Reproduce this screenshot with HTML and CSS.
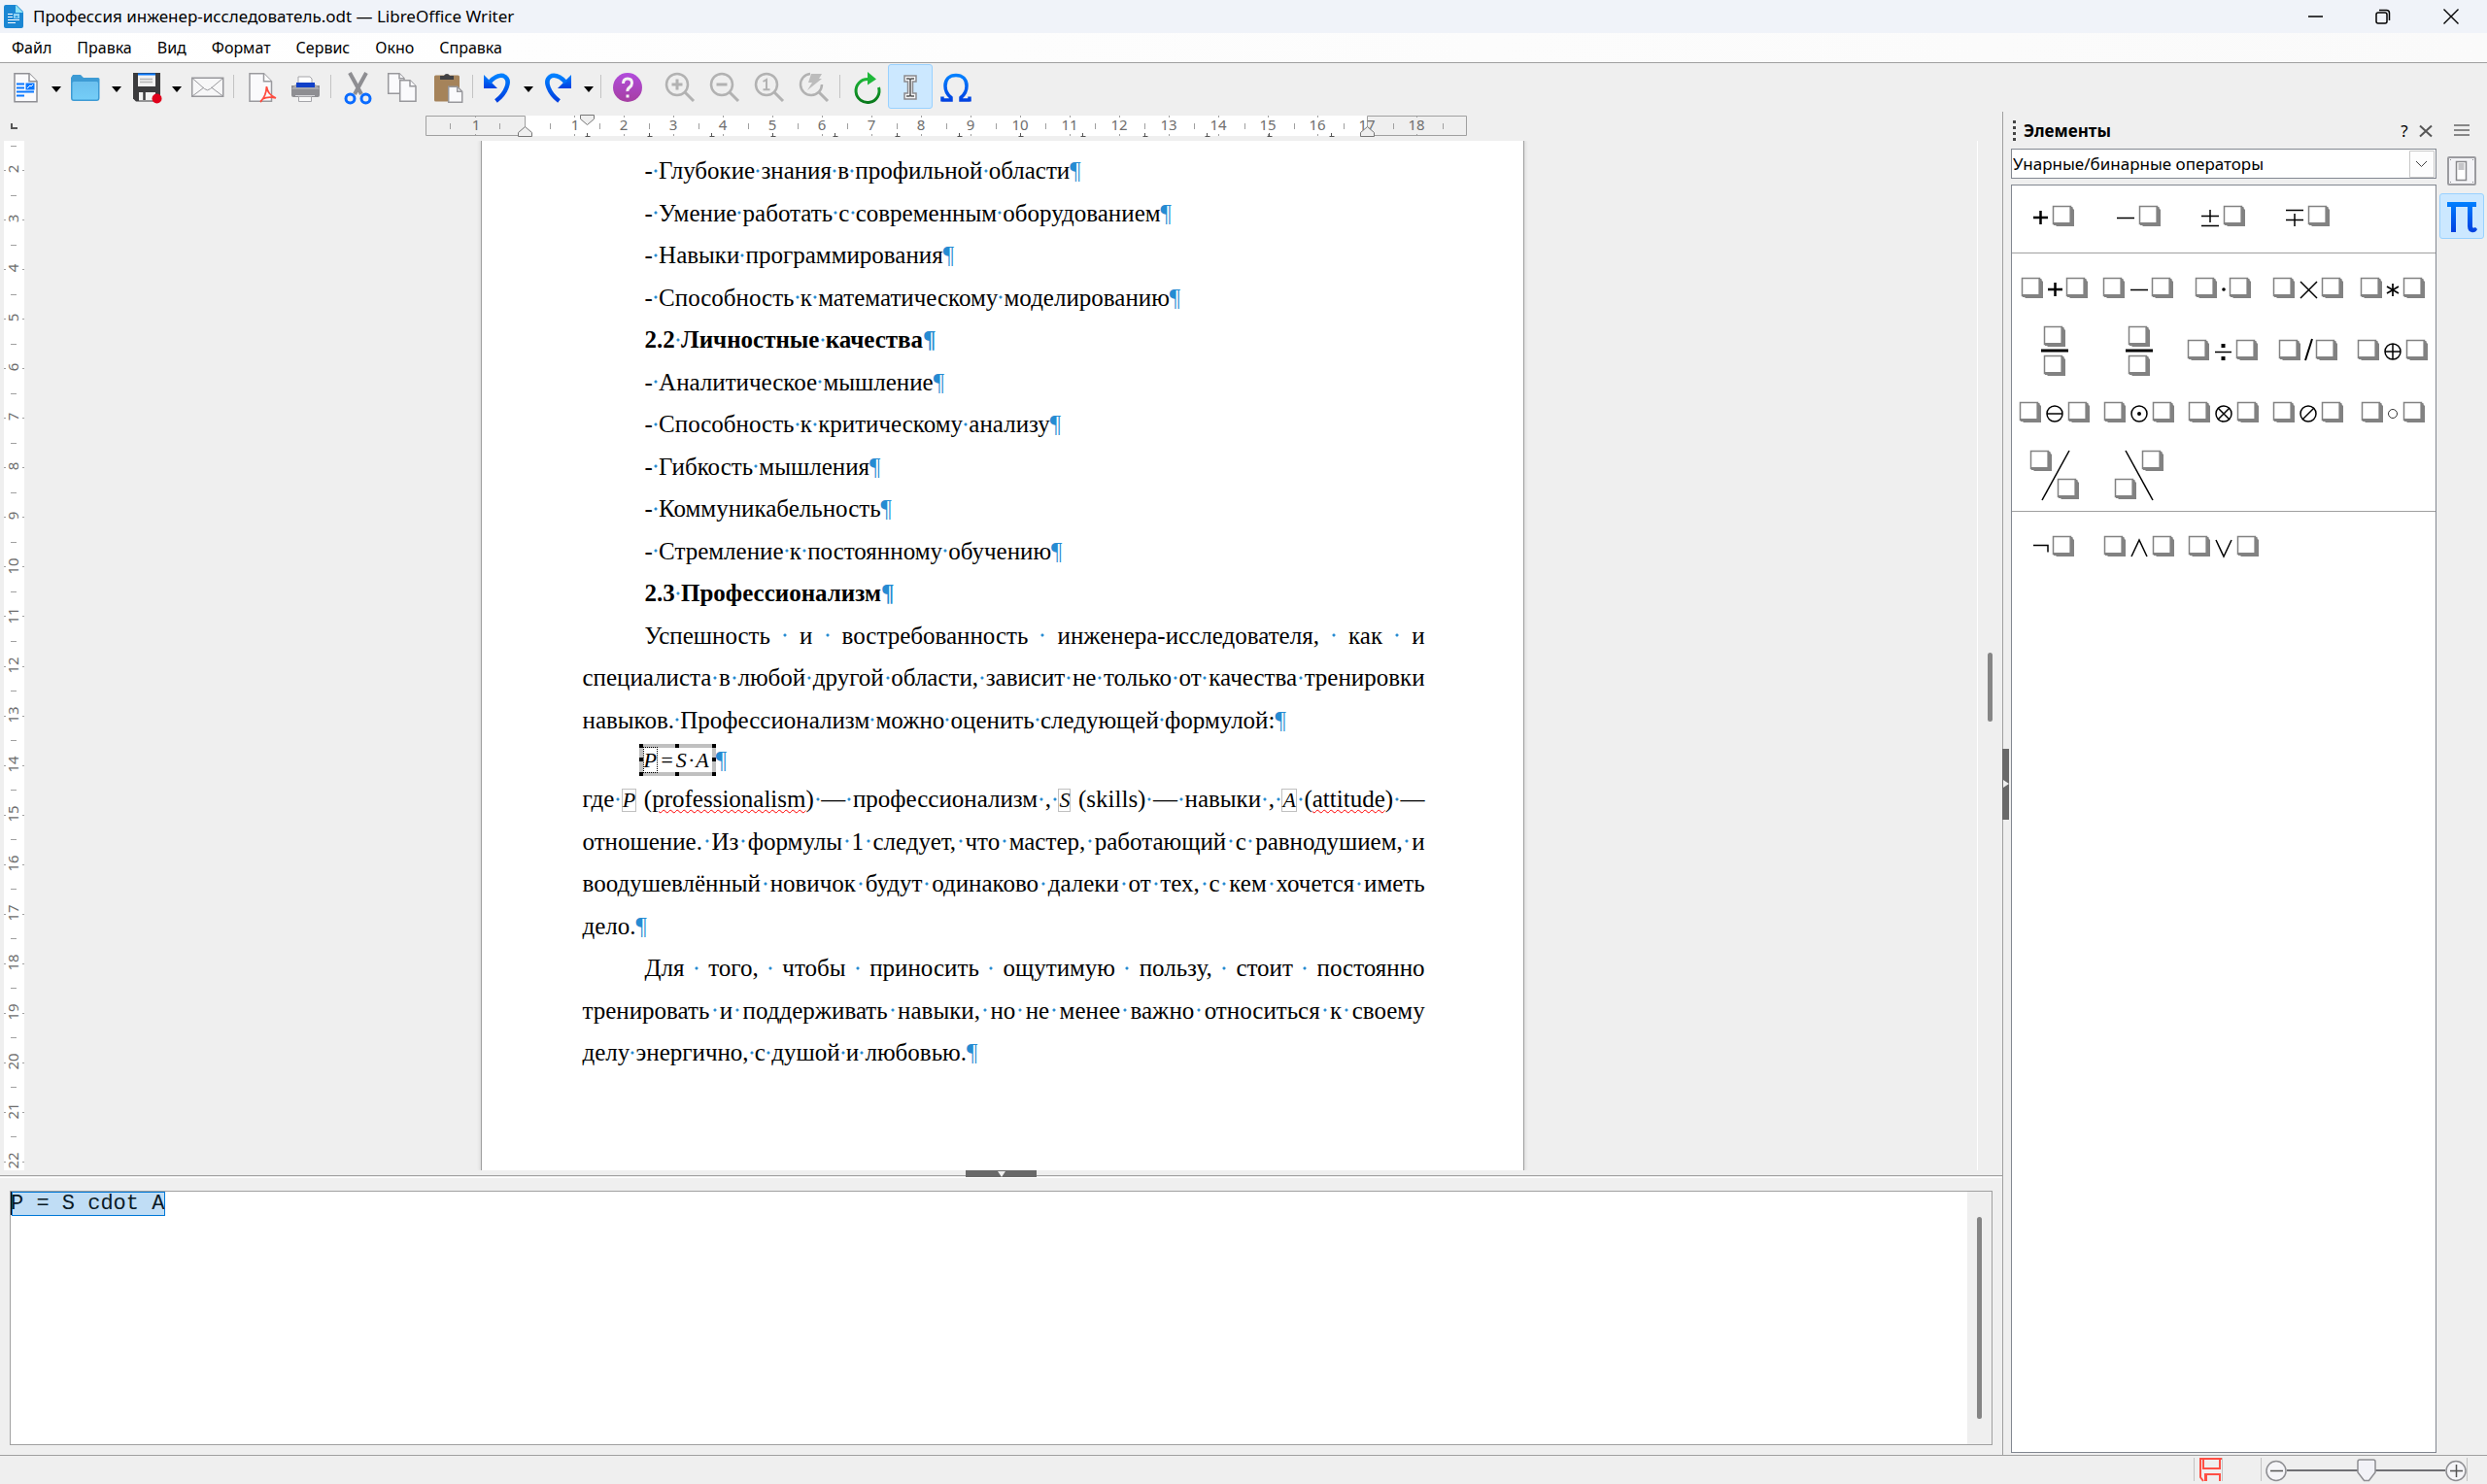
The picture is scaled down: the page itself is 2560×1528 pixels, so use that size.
FILE: index.html
```html
<!DOCTYPE html>
<html lang="ru">
<head>
<meta charset="utf-8">
<title>Профессия инженер-исследователь.odt — LibreOffice Writer</title>
<link rel="stylesheet" href="styles.css">
</head>
<body>
<svg class="defs" aria-hidden="true">
  <defs>
    <linearGradient id="blue" x1="0" y1="0" x2="0" y2="1"><stop offset="0" stop-color="#0080ff"/><stop offset="1" stop-color="#003fe0"/></linearGradient>
    <linearGradient id="sky" x1="0" y1="0" x2="0" y2="1"><stop offset="0" stop-color="#6cc0ee"/><stop offset="1" stop-color="#74cdf7"/></linearGradient>
    <linearGradient id="violet" x1="0" y1="0" x2="0" y2="1"><stop offset="0" stop-color="#b14cdc"/><stop offset="1" stop-color="#a63fa2"/></linearGradient>
    <linearGradient id="green" gradientUnits="userSpaceOnUse" x1="0" y1="4" x2="0" y2="32"><stop offset="0" stop-color="#1fbf3c"/><stop offset="1" stop-color="#0a7a1c"/></linearGradient>
    <g id="sq"><path d="M2 18h16V2h2l2 2v17H4l-2-2z" fill="#828282"/><path d="M.5 .5h18v18h-18z" fill="#fff" stroke="#828282"/><path d="M19 1v18M1 18.500h18" stroke="#828282" stroke-width="3"/></g>
  </defs>
</svg>

<header class="titlebar">
  <svg class="app-icon" width="20" height="24" viewBox="0 0 20 24"><path d="M2 0h11l7 7v15a2 2 0 0 1-2 2H2a2 2 0 0 1-2-2V2a2 2 0 0 1 2-2z" fill="#1b87d3"/><path d="M12 0l8 8h-8z" fill="#8fe3f5"/><path d="M4 9.500h5M4 12.500h5M4 15.500h12M4 18.500h8" stroke="#fff"/><path d="M10 9h6v5h-6z" fill="#8fd4f5"/><path d="M11 13l2-2 2 2z" fill="#1b87d3"/></svg>
  <h1 class="title">Профессия инженер-исследователь.odt — LibreOffice Writer</h1>
  <div class="window-buttons">
    <button aria-label="Свернуть"><svg width="16" height="16" viewBox="0 0 16 16"><path d="M1 8h15" stroke="#000" stroke-width="1.500"/></svg></button>
    <button aria-label="Восстановить"><svg width="16" height="16" viewBox="0 0 16 16" fill="none" stroke="#000" stroke-width="1.500"><rect x="1" y="4" width="11" height="11" rx="2"/><path d="M4 1.500h7.500a3 3 0 0 1 3 3V12"/></svg></button>
    <button aria-label="Закрыть"><svg width="16" height="16" viewBox="0 0 16 16"><path d="M.5 .5l15 15m0-15l-15 15" stroke="#000" stroke-width="1.400"/></svg></button>
  </div>
</header>

<nav class="menubar">
  <button>Файл</button><button>Правка</button><button>Вид</button><button>Формат</button><button>Сервис</button><button>Окно</button><button>Справка</button>
</nav>

<div class="toolbar">
  <div class="group">
    <button class="tool" aria-label="Создать"><svg viewBox="0 0 32 32"><path d="M4 2.700h15l8 8v21H4z" fill="#fafafc" stroke="#8f8f94" stroke-width="1.500"/><path d="M19 2.700v8h8" fill="#fff" stroke="#8f8f94" stroke-width="1.500"/><path d="M6 13.500h8M6 17.500h8M6 21.500h18M6 25.500h8" stroke="#0a78ff" stroke-width="2"/><path d="M15.500 12.500h9v7h-9z" fill="#0a78ff"/><path d="M17 18l3-3 1 1 2-2" stroke="#fff" fill="none"/></svg></button><button class="drop" aria-label="Создать: список"></button>
    <button class="tool" aria-label="Открыть"><svg viewBox="0 0 32 32"><path d="M0 7l2-3h8l3 3h15a1.500 1.500 0 0 1 1.500 1.500V28a3 3 0 0 1-3 3H3a3 3 0 0 1-3-3z" fill="#3d9bd4"/><rect x="1.500" y="11" width="26.500" height="18.500" rx="1.500" fill="url(#sky)"/></svg></button><button class="drop" aria-label="Открыть: список"></button>
    <button class="tool" aria-label="Сохранить"><svg viewBox="0 0 32 32"><path d="M2 2h28v29.500H5l-3-3z" fill="#3b3b3d"/><path d="M7 3h18v13H7z" fill="#f2f2f2"/><path d="M7 3.500h18" stroke="#0a78ff" stroke-width="2"/><path d="M9 8.500h13M9 11.500h13" stroke="#b5b5b5" stroke-width="1.500"/><path d="M8 22h17v8.500H8z" fill="#f2f2f2"/><path d="M13.500 22v8" stroke="#3b3b3d" stroke-width="2.500"/><circle cx="26.500" cy="28.500" r="5" fill="#e0001b"/></svg></button><button class="drop" aria-label="Сохранить: список"></button>
    <button class="tool" aria-label="Отправить документ"><svg viewBox="0 0 32 32" fill="none" stroke="#98989c" stroke-width="1.500"><path d="M.7 7.200h32v19H.7z" fill="#f7f7f8"/><path d="M1 7.500l12.500 11a4.500 4.500 0 0 0 6 0L32.500 7.500M1 26l12-9M32.500 26l-12-9" stroke-width="1"/></svg></button>
  </div>
  <div class="group ruled">
    <button class="tool" aria-label="Экспорт в PDF"><svg viewBox="0 0 32 32"><path d="M6 2.700h14.500l8 8v20.500H6z" fill="#fafafc" stroke="#9a9a9e" stroke-width="1.500"/><path d="M20.500 2.700v8h8" fill="#fff" stroke="#9a9a9e" stroke-width="1.500"/><path d="M17 32q6-6 6.500-16 .5 8 9.500 12-8-2-14 1" fill="none" stroke="#ff4b3e" stroke-width="1.800"/></svg></button>
    <button class="tool" aria-label="Печать"><svg viewBox="0 0 32 32"><path d="M3 15h29v10a2 2 0 0 1-2 2H5a2 2 0 0 1-2-2z" fill="#8e8e92"/><path d="M3 19l4-5h21l4 5z" fill="#a9a9ad"/><path d="M10 6h12l2 2v6H10z" fill="#fff" stroke="#a5a5a9"/><path d="M8 12h19v5H8z" fill="#1140c8"/><path d="M7 25.500h20" stroke="#d5d5d8"/><path d="M10.500 26.500h13v5h-13z" fill="#f8f8f8" stroke="#a5a5a9"/></svg></button>
  </div>
  <div class="group ruled">
    <button class="tool" aria-label="Вырезать"><svg viewBox="0 0 32 32"><path d="M9 2l12 22M26 2L14 24" stroke="#8e8e92" stroke-width="4"/><circle cx="9.500" cy="28.500" r="4.500" fill="none" stroke="#0a6bff" stroke-width="3"/><circle cx="25.500" cy="28.500" r="4.500" fill="none" stroke="#0a6bff" stroke-width="3"/></svg></button>
    <button class="tool" aria-label="Копировать"><svg viewBox="0 0 32 32" fill="#fafafc" stroke="#98989c" stroke-width="1.500"><path d="M2.700 2.700H14l5 5v15.500H2.700z"/><path d="M14 2.700v5h5"/><path d="M14.700 9.700H25l6 6v15.500H14.700z"/><path d="M25 9.700v6h6"/></svg></button>
    <button class="tool" aria-label="Вставить"><svg viewBox="0 0 32 32"><rect x="4" y="4.500" width="26" height="27" rx="1.500" fill="#a5835a"/><path d="M10 9V5h4a3.200 3.200 0 0 1 6 0h4v4z" fill="#414144"/><path d="M18.700 16.200h9l5 5v11H18.700z" fill="#fafafc" stroke="#98989c" stroke-width="1.500"/><path d="M27.700 16.200v5h5" fill="none" stroke="#98989c" stroke-width="1.500"/></svg></button>
  </div>
  <div class="group ruled">
    <button class="tool" aria-label="Отменить"><svg viewBox="0 0 32 32"><path d="M1 4v14h14z" fill="url(#blue)"/><path d="M6.500 12Q14 3.500 21 5q7 3 3.500 12-3 8-11 14" fill="none" stroke="url(#blue)" stroke-width="4.500"/></svg></button><button class="drop" aria-label="Отменить: список"></button>
    <button class="tool" aria-label="Вернуть"><svg viewBox="0 0 32 32"><path d="M29 4v14H15z" fill="url(#blue)"/><path d="M23.500 12Q16 3.500 9 5q-7 3-3.500 12 3 8 11 14" fill="none" stroke="url(#blue)" stroke-width="4.500"/></svg></button><button class="drop" aria-label="Вернуть: список"></button>
  </div>
  <div class="group ruled">
    <button class="tool" aria-label="Справка"><svg viewBox="0 0 32 32"><circle cx="17" cy="17" r="15" fill="url(#violet)"/><path d="M12.500 13q0-5 4.500-5t4.500 4.500q0 2.500-2.500 4.500t-2 4" fill="none" stroke="#f4f4f4" stroke-width="3"/><path d="M15.500 24.500h3v3h-3z" fill="#f4f4f4"/></svg></button>
  </div>
  <div class="group">
    <button class="tool" aria-label="Увеличить"><svg viewBox="0 0 32 32" fill="none" stroke="#b2b2b2"><circle cx="14" cy="14" r="11" stroke-width="2.500"/><path d="M8.500 14h11M14 8.500v11" stroke-width="3"/><path d="M22 22l9 9" stroke-width="3"/></svg></button>
    <button class="tool" aria-label="Уменьшить"><svg viewBox="0 0 32 32" fill="none" stroke="#b2b2b2"><circle cx="14" cy="14" r="11" stroke-width="2.500"/><path d="M8.500 14h11" stroke-width="3"/><path d="M22 22l9 9" stroke-width="3"/></svg></button>
    <button class="tool" aria-label="Масштаб 100%"><svg viewBox="0 0 32 32" fill="none" stroke="#b2b2b2"><circle cx="14" cy="14" r="11" stroke-width="2.500"/><path d="M10.500 11l3.500-2v10M10.500 19.200h7" stroke-width="2"/><path d="M22 22l9 9" stroke-width="3"/></svg></button>
    <button class="tool" aria-label="Показать всё"><svg viewBox="0 0 32 32" fill="none" stroke="#b2b2b2"><path d="M13 3a11 11 0 1 0 12 11" stroke-width="2.500"/><path d="M22 22l9 9" stroke-width="3"/><path d="M14 3h11l-3 5h3L10 20l5-8h-4z" fill="#bcbcbc" stroke="none"/></svg></button>
  </div>
  <div class="group ruled">
    <button class="tool" aria-label="Обновить"><svg viewBox="0 0 32 32"><path d="M18 8.500A12 12 0 1 0 29.500 17" fill="none" stroke="url(#green)" stroke-width="3"/><path d="M18 1l9 7.500-9 6z" fill="#1fb83a"/></svg></button>
    <button class="tool active" aria-label="Курсор формулы"><svg viewBox="0 0 32 32"><path d="M10 5h12v6h-3.500v12H22v6H10v-6h3.500V11H10z" fill="#f4f6f8" stroke="#8a8a8e" stroke-width="1.500"/><path d="M12 8h3l1 1 1-1h3M12 26h3l1-1 1 1h3M16 9v16" fill="none" stroke="#555" stroke-width="1.500"/></svg></button>
    <button class="tool" aria-label="Символы"><svg viewBox="0 0 32 32"><path d="M3 31.500v-5M2.500 30h9.500v-2.500C7.500 24 6 20.500 6 15.500 6 8.500 10.500 4.500 17 4.500s11 4 11 11c0 5-1.500 8.500-6 12V30h9.500M31 31.500v-5" fill="none" stroke="url(#blue)" stroke-width="3.500"/></svg></button>
  </div>
</div>

<main class="main">
  <section class="workspace">
    <div class="hruler">
      <svg width="1188" height="30" viewBox="438 0 1188 30">
        <path d="M540 4h868v21H540z" fill="#fff"/>
        <path d="M540.500 4.500H438.500v20H540.500zM1407.500 4.500h102v20h-102z" fill="#efefef" stroke="#a0a0a0"/>
        <path d="M463.500 12v6M514.500 12v6M566.500 12v6M617.500 12v6M668.500 12v6M719.500 12v6M770.500 12v6M821.500 12v6M872.500 12v6M923.500 12v6M974.500 12v6M1025.500 12v6M1076.500 12v6M1127.500 12v6M1178.500 12v6M1229.500 12v6M1281.500 12v6M1332.500 12v6M1383.500 12v6M1434.500 12v6M1485.500 12v6" stroke="#a0a0a0"/>
        <path d="M489.500 4v2m0 17v2M591.500 4v2m0 17v2M642.500 4v2m0 17v2M693.500 4v2m0 17v2M744.500 4v2m0 17v2M795.500 4v2m0 17v2M846.500 4v2m0 17v2M897.500 4v2m0 17v2M948.500 4v2m0 17v2M999.500 4v2m0 17v2M1050.500 4v2m0 17v2M1101.500 4v2m0 17v2M1152.500 4v2m0 17v2M1203.500 4v2m0 17v2M1254.500 4v2m0 17v2M1305.500 4v2m0 17v2M1356.500 4v2m0 17v2M1458.500 4v2m0 17v2" stroke="#a0a0a0"/>
        <path d="M604.500 22v4m-2-.5h5M668.500 22v4m-2-.5h5M732.500 22v4m-2-.5h5M795.500 22v4m-2-.5h5M859.500 22v4m-2-.5h5M923.500 22v4m-2-.5h5M987.500 22v4m-2-.5h5M1050.500 22v4m-2-.5h5M1114.500 22v4m-2-.5h5M1178.500 22v4m-2-.5h5M1242.500 22v4m-2-.5h5M1306.500 22v4m-2-.5h5M1370.500 22v4m-2-.5h5" stroke="#555"/>
        <g class="marks"><text x="490" y="19">1</text><text x="592" y="19">1</text><text x="642" y="19">2</text><text x="693" y="19">3</text><text x="744" y="19">4</text><text x="795" y="19">5</text><text x="846" y="19">6</text><text x="897" y="19">7</text><text x="948" y="19">8</text><text x="999" y="19">9</text><text x="1050" y="19">10</text><text x="1101" y="19">11</text><text x="1152" y="19">12</text><text x="1203" y="19">13</text><text x="1254" y="19">14</text><text x="1305" y="19">15</text><text x="1356" y="19">16</text><text x="1407" y="19">17</text><text x="1458" y="19">18</text></g>
        <path d="M597.500 3.500h14v4l-7 6-7-6zM540.500 15.500l7 6v4h-14v-4zM1407.500 15.500l7 6v4h-14v-4z" fill="#efefef" stroke="#777"/>
      </svg>
      <span class="tab-kind"></span>
    </div>

    <div class="canvas">
      <div class="vruler">
        <svg width="28" height="1060" viewBox="0 145 28 1060">
          <path d="M4 145h21v1060H4z" fill="#fff"/>
          <path d="M11 150.500h6M11 201.500h6M11 252.500h6M11 303.500h6M11 354.500h6M11 405.500h6M11 456.500h6M11 507.500h6M11 558.500h6M11 609.500h6M11 660.500h6M11 711.500h6M11 762.500h6M11 813.500h6M11 864.500h6M11 915.500h6M11 966.500h6M11 1017.500h6M11 1068.500h6M11 1119.500h6M11 1170.500h6" stroke="#a0a0a0"/>
          <path d="M4 175.500h2m17 0h2M4 226.500h2m17 0h2M4 277.500h2m17 0h2M4 328.500h2m17 0h2M4 379.500h2m17 0h2M4 430.500h2m17 0h2M4 481.500h2m17 0h2M4 532.500h2m17 0h2M4 583.500h2m17 0h2M4 634.500h2m17 0h2M4 686.500h2m17 0h2M4 737.500h2m17 0h2M4 788.500h2m17 0h2M4 839.500h2m17 0h2M4 890.500h2m17 0h2M4 941.500h2m17 0h2M4 992.500h2m17 0h2M4 1043.500h2m17 0h2M4 1094.500h2m17 0h2M4 1145.500h2m17 0h2M4 1196.500h2m17 0h2" stroke="#a0a0a0"/>
          <g class="marks" transform="rotate(-90)"><text x="-174" y="19">2</text><text x="-225" y="19">3</text><text x="-276" y="19">4</text><text x="-327" y="19">5</text><text x="-378" y="19">6</text><text x="-429" y="19">7</text><text x="-480" y="19">8</text><text x="-531" y="19">9</text><text x="-583" y="19">10</text><text x="-634" y="19">11</text><text x="-685" y="19">12</text><text x="-736" y="19">13</text><text x="-787" y="19">14</text><text x="-838" y="19">15</text><text x="-889" y="19">16</text><text x="-940" y="19">17</text><text x="-991" y="19">18</text><text x="-1042" y="19">19</text><text x="-1093" y="19">20</text><text x="-1144" y="19">21</text><text x="-1195" y="19">22</text></g>
        </svg>
      </div>
      <div class="viewport">
        <article class="page">
          <p>-<i> </i>Глубокие<i> </i>знания<i> </i>в<i> </i>профильной<i> </i>области<b class="pilcrow">¶</b></p>
          <p>-<i> </i>Умение<i> </i>работать<i> </i>с<i> </i>современным<i> </i>оборудованием<b class="pilcrow">¶</b></p>
          <p>-<i> </i>Навыки<i> </i>программирования<b class="pilcrow">¶</b></p>
          <p>-<i> </i>Способность<i> </i>к<i> </i>математическому<i> </i>моделированию<b class="pilcrow">¶</b></p>
          <h2>2.2<i> </i>Личностные<i> </i>качества<b class="pilcrow">¶</b></h2>
          <p>-<i> </i>Аналитическое<i> </i>мышление<b class="pilcrow">¶</b></p>
          <p>-<i> </i>Способность<i> </i>к<i> </i>критическому<i> </i>анализу<b class="pilcrow">¶</b></p>
          <p>-<i> </i>Гибкость<i> </i>мышления<b class="pilcrow">¶</b></p>
          <p>-<i> </i>Коммуникабельность<b class="pilcrow">¶</b></p>
          <p>-<i> </i>Стремление<i> </i>к<i> </i>постоянному<i> </i>обучению<b class="pilcrow">¶</b></p>
          <h2>2.3<i> </i>Профессионализм<b class="pilcrow">¶</b></h2>
          <p>Успешность<i> </i>и<i> </i>востребованность<i> </i>инженера-исследователя,<i> </i>как<i> </i>и<i> </i>специалиста<i> </i>в<i> </i>любой<i> </i>другой<i> </i>области,<i> </i>зависит<i> </i>не<i> </i>только<i> </i>от<i> </i>качества<i> </i>тренировки<i> </i>навыков.<i> </i>Профессионализм<i> </i>можно<i> </i>оценить<i> </i>следующей<i> </i>формулой:<b class="pilcrow">¶</b></p>
          <div class="formula-line">
            <div class="formula"><span class="operand">P</span><span>=</span><span>S</span><span>·</span><span>A</span></div><b class="pilcrow">¶</b>
          </div>
          <p class="flush">где<i> </i><span class="inline-formula">P</span> (<u>professionalism</u>)<i> </i>—<i> </i>профессионализм<i> </i>,<i> </i><span class="inline-formula">S</span> (skills)<i> </i>—<i> </i>навыки<i> </i>,<i> </i><span class="inline-formula">A</span><i> </i>(<u>attitude</u>)<i> </i>—<i> </i>отношение.<i> </i>Из<i> </i>формулы<i> </i>1<i> </i>следует,<i> </i>что<i> </i>мастер,<i> </i>работающий<i> </i>с<i> </i>равнодушием,<i> </i>и<i> </i>воодушевлённый<i> </i>новичок<i> </i>будут<i> </i>одинаково<i> </i>далеки<i> </i>от<i> </i>тех,<i> </i>с<i> </i>кем<i> </i>хочется<i> </i>иметь<i> </i>дело.<b class="pilcrow">¶</b></p>
          <p>Для<i> </i>того,<i> </i>чтобы<i> </i>приносить<i> </i>ощутимую<i> </i>пользу,<i> </i>стоит<i> </i>постоянно<i> </i>тренировать<i> </i>и<i> </i>поддерживать<i> </i>навыки,<i> </i>но<i> </i>не<i> </i>менее<i> </i>важно<i> </i>относиться<i> </i>к<i> </i>своему<i> </i>делу<i> </i>энергично,<i> </i>с<i> </i>душой<i> </i>и<i> </i>любовью.<b class="pilcrow">¶</b></p>
        </article>
      </div>
      <div class="scrollbar"><span class="thumb page-thumb"></span></div>
    </div>

    <div class="splitter"><button class="splitter-handle" aria-label="Скрыть панель команд"><svg width="8" height="6" viewBox="0 0 8 6"><path d="M0 0h8L4 6z" fill="#f0f0f0"/></svg></button></div>
    <div class="command">
      <textarea class="code" aria-label="Команды формулы" spellcheck="false">P = S cdot A</textarea>
      <div class="command-scroll"><span class="thumb tall"></span></div>
    </div>
  </section>

  <aside class="sidebar">
    <button class="side-handle" aria-label="Скрыть боковую панель"><svg width="6" height="8" viewBox="0 0 6 8"><path d="M0 0v8l6-4z" fill="#f0f0f0"/></svg></button>
    <div class="deck">
      <div class="deck-head">
        <span class="grip"></span>
        <h2 class="deck-title">Элементы</h2>
        <button class="deck-btn" aria-label="Справка по панели">?</button>
        <button class="deck-btn" aria-label="Закрыть панель"><svg width="12" height="12" viewBox="0 0 12 12"><path d="M0 .5l12 11M12 .5L0 11.500" stroke="#555" stroke-width="2"/></svg></button>
      </div>
      <label class="combo"><select aria-label="Категория элементов"><option>Унарные/бинарные операторы</option></select><svg class="chevron" width="26" height="28" viewBox="0 0 26 28"><path d="M.5 .5h25v27H.5z" fill="#fdfdfd" stroke="#c8c8c8"/><path d="M7 11l5.500 5.500L18 11" fill="none" stroke="#444"/></svg></label>
      <div class="elements">
        <div class="set">
          <button aria-label="+a"><svg viewBox="-43 -32 86 64"><path d="M-22 1h15M-14.500-6v14" stroke-width="2.500"/><use href="#sq" x="-2" y="-11"/></svg></button>
          <button aria-label="−a"><svg viewBox="-43 -32 86 64"><path d="M-23 1.500h18"/><use href="#sq" x="0" y="-11"/></svg></button>
          <button aria-label="±a"><svg viewBox="-43 -32 86 64"><path d="M-23-.5h18M-14-7V6M-23 9.500h18"/><use href="#sq" x="0" y="-11"/></svg></button>
          <button aria-label="∓a"><svg viewBox="-43 -32 86 64"><path d="M-23-6.500h18M-14-3v13M-23 3.500h18"/><use href="#sq" x="0" y="-11"/></svg></button>
        </div>
        <div class="set">
          <button aria-label="a+b"><svg viewBox="-43 -32 86 64"><use href="#sq" x="-34" y="-11"/><path d="M-7 1H8M.5-6V8" stroke-width="2.500"/><use href="#sq" x="12" y="-11"/></svg></button>
          <button aria-label="a−b"><svg viewBox="-43 -32 86 64"><use href="#sq" x="-37" y="-11"/><path d="M-9 1.500H9"/><use href="#sq" x="13" y="-11"/></svg></button>
          <button aria-label="a·b"><svg viewBox="-43 -32 86 64"><use href="#sq" x="-29" y="-11"/><circle cx="0" cy="1" r="1.800" fill="#000" stroke="none"/><use href="#sq" x="6" y="-11"/></svg></button>
          <button aria-label="a×b"><svg viewBox="-43 -32 86 64"><use href="#sq" x="-36" y="-11"/><path d="M-8-7L9 10M9-7L-8 10"/><use href="#sq" x="14" y="-11"/></svg></button>
          <button aria-label="a∗b"><svg viewBox="-43 -32 86 64"><use href="#sq" x="-33" y="-11"/><path d="M0-5V8M-6-2L6 5M6-2L-6 5" stroke-width="1.700"/><use href="#sq" x="11" y="-11"/></svg></button>
          <button aria-label="a/b дробь"><svg viewBox="-43 -32 86 64"><use href="#sq" x="-11" y="-25"/><path d="M-14 0h28" stroke-width="3"/><use href="#sq" x="-11" y="5"/></svg></button>
          <button aria-label="a/b дробь в строке"><svg viewBox="-43 -32 86 64"><use href="#sq" x="-11" y="-25"/><path d="M-14 0h28" stroke-width="3"/><use href="#sq" x="-11" y="5"/></svg></button>
          <button aria-label="a÷b"><svg viewBox="-43 -32 86 64"><use href="#sq" x="-37" y="-11"/><path d="M-9 1.500H8"/><path d="M-2.500-7h4v4h-4zM-2.500 6h4v4h-4z" fill="#000" stroke="none"/><use href="#sq" x="13" y="-11"/></svg></button>
          <button aria-label="a/b"><svg viewBox="-43 -32 86 64"><use href="#sq" x="-30" y="-11"/><path d="M4-12L-3 10" stroke-width="2"/><use href="#sq" x="8" y="-11"/></svg></button>
          <button aria-label="a⊕b"><svg viewBox="-43 -32 86 64"><use href="#sq" x="-36" y="-11"/><circle cx="0" cy="1" r="8"/><path d="M-8 1H8M0-7V9"/><use href="#sq" x="14" y="-11"/></svg></button>
          <button aria-label="a⊖b"><svg viewBox="-43 -32 86 64"><use href="#sq" x="-36" y="-11"/><circle cx="0" cy="1" r="8"/><path d="M-8 1H8"/><use href="#sq" x="14" y="-11"/></svg></button>
          <button aria-label="a⊙b"><svg viewBox="-43 -32 86 64"><use href="#sq" x="-36" y="-11"/><circle cx="0" cy="1" r="8"/><circle cx="0" cy="1" r="2" fill="#000" stroke="none"/><use href="#sq" x="14" y="-11"/></svg></button>
          <button aria-label="a⊗b"><svg viewBox="-43 -32 86 64"><use href="#sq" x="-36" y="-11"/><circle cx="0" cy="1" r="8"/><path d="M-6-5L6 7M6-5L-6 7"/><use href="#sq" x="14" y="-11"/></svg></button>
          <button aria-label="a⊘b"><svg viewBox="-43 -32 86 64"><use href="#sq" x="-36" y="-11"/><circle cx="0" cy="1" r="8"/><path d="M6-5L-6 7"/><use href="#sq" x="14" y="-11"/></svg></button>
          <button aria-label="a∘b"><svg viewBox="-43 -32 86 64"><use href="#sq" x="-32" y="-11"/><circle cx="0" cy="1" r="4.500" stroke="#333" stroke-width="1"/><use href="#sq" x="11" y="-11"/></svg></button>
          <button aria-label="a слеш b"><svg viewBox="-43 -32 86 64"><use href="#sq" x="-25" y="-25"/><path d="M15-25L-13 26"/><use href="#sq" x="3" y="4"/></svg></button>
          <button aria-label="a обратный слеш b"><svg viewBox="-43 -32 86 64"><use href="#sq" x="3" y="-25"/><path d="M-14-25L14 26"/><use href="#sq" x="-25" y="4"/></svg></button>
        </div>
        <div class="set">
          <button aria-label="¬a"><svg viewBox="-43 -32 86 64"><path d="M-22-1.500h15v7"/><use href="#sq" x="-2" y="-11"/></svg></button>
          <button aria-label="a∧b"><svg viewBox="-43 -32 86 64"><use href="#sq" x="-36" y="-11"/><path d="M-8 10L0-7 8 10"/><use href="#sq" x="14" y="-11"/></svg></button>
          <button aria-label="a∨b"><svg viewBox="-43 -32 86 64"><use href="#sq" x="-36" y="-11"/><path d="M-8-7L0 10 8-7"/><use href="#sq" x="14" y="-11"/></svg></button>
        </div>
      </div>
    </div>
    <div class="tabs">
      <button class="hamburger" aria-label="Настройки боковой панели"><svg width="16" height="12" viewBox="0 0 16 12"><path d="M0 1h16M0 6h16M0 11h16" stroke="#666" stroke-width="1.500"/></svg></button>
      <button class="tab" aria-label="Свойства"><svg width="30" height="30" viewBox="0 0 30 30"><rect x="1" y="1" width="28" height="28" rx="1" fill="#f3f3f6" stroke="#9b9b9f" stroke-width="2"/><path d="M9.500 5.500h10v19h-10z" fill="#fff" stroke="#88888c" stroke-width="1.500"/><path d="M11.500 7h6v7h-6z" fill="#c5c5c8"/><path d="M3 3h1v1H3zM26 3h1v1h-1zM3 26h1v1H3zM26 26h1v1h-1z" fill="#88888c"/></svg></button>
      <button class="tab active" aria-label="Элементы"><svg width="32" height="32" viewBox="0 0 32 32"><path d="M1 1h30v5h-4v20q0 3 3 1l2 2q-2 4-6 3-4-1-4-6V6H10v26H5V6H1z" fill="url(#blue)"/></svg></button>
    </div>
  </aside>
</main>

<footer class="statusbar">
  <button class="unsaved" aria-label="Документ изменён"><svg width="23" height="24" viewBox="0 0 23 24" fill="none" stroke="#ff5045" stroke-width="2"><path d="M23 1H1v19l3 4M4 2v9h17V2M6 24v-7h15v7M7 17v7" /></svg></button>
  <div class="zoom">
    <button class="zoom-btn" aria-label="Уменьшить масштаб"><svg width="22" height="23" viewBox="0 0 22 23"><circle cx="11" cy="11.500" r="10" fill="#f5f5f8" stroke="#8e8e92" stroke-width="1.500"/><path d="M5 11.500h13" stroke="#555" stroke-width="1.500"/></svg></button>
    <input class="zoom-range" type="range" min="0" max="100" value="50" aria-label="Масштаб">
    <button class="zoom-btn" aria-label="Увеличить масштаб"><svg width="22" height="23" viewBox="0 0 22 23"><circle cx="11" cy="11.500" r="10" fill="#f5f5f8" stroke="#8e8e92" stroke-width="1.500"/><path d="M5 11.500h13M11.500 5v13" stroke="#555" stroke-width="1.500"/></svg></button>
  </div>
</footer>
</body>
</html>
```

FILE: styles.css
```css
* { box-sizing: border-box; }

body {
  margin: 0;
  height: 100vh;
  display: flex;
  flex-direction: column;
  overflow: hidden;
  background: #efefef;
  color: #000;
  font: 17px/24px "Noto Sans", "Open Sans", sans-serif;
}

button {
  margin: 0;
  padding: 0;
  border: 0;
  background: none;
  color: inherit;
  font: inherit;
}

svg { display: block; overflow: visible; }
.defs { position: absolute; width: 0; height: 0; }

/* Window title */
.titlebar {
  flex: none;
  display: flex;
  align-items: center;
  gap: 10px;
  height: 34px;
  padding: 0 2px 0 4px;
  background: #f0f3f9;
}
.title { flex: 1; margin: 0; font-size: 17px; font-weight: 400; }
.window-buttons { display: flex; }
.window-buttons button { width: 70px; height: 34px; display: grid; place-items: center; }

/* Menu */
.menubar {
  flex: none;
  display: flex;
  gap: 26px;
  height: 31px;
  padding: 0 12px;
  border-bottom: 1px solid #a0a0a0;
  background: linear-gradient(to right, #fff, #fafafa);
  font-size: 16px;
}

/* Toolbar */
.toolbar {
  flex: none;
  display: flex;
  gap: 8px;
  height: 50px;
  padding: 1px 4px;
}
.group { position: relative; display: flex; }
.ruled::before {
  content: "";
  position: absolute;
  left: -4px;
  top: 11px;
  width: 1px;
  height: 24px;
  background: #c3c3c3;
}
.tool { width: 46px; height: 46px; display: grid; place-items: center; }
.tool svg { width: 32px; height: 32px; }
.tool.active { background: #cce8ff; border: 1px solid #99d1ff; border-radius: 3px; }
.drop { width: 16px; height: 46px; display: grid; place-items: center; }
.drop::after {
  content: "";
  margin-top: 6px;
  border: 5px solid transparent;
  border-top: 6px solid #000;
  border-bottom: 0;
}

/* Work area */
.main { flex: 1; min-height: 0; display: flex; }
.workspace { flex: 1; min-width: 0; display: flex; flex-direction: column; }

.hruler {
  flex: none;
  position: relative;
  display: flex;
  justify-content: center;
  height: 30px;
  padding: 0 25px 0 28px;
}
.tab-kind {
  position: absolute;
  left: 11px;
  top: 12px;
  width: 7px;
  height: 6px;
  border: solid #555;
  border-width: 0 0 2px 2px;
}
.marks { fill: #6e6e6e; font-size: 15px; text-anchor: middle; }

.canvas { flex: 1; min-height: 0; display: flex; }
.vruler { flex: none; width: 28px; overflow: hidden; }
.viewport { flex: 1; display: flex; justify-content: center; overflow: hidden; }
.page {
  width: 1072px;
  height: 100%;
  padding: 9px 101px 0 104px;
  background: #fff;
  box-shadow: 0 0 0 1px #a0a0a0, 0 0 4px 1px #c8c8c8;
  font: 25px/1.74 "Liberation Serif", serif;
}
.page p, .page h2 { margin: 0; text-indent: 64px; text-align: justify; }
.page h2 { font: inherit; font-weight: 700; }
.page .flush { text-indent: 0; }
.page i { background: radial-gradient(circle, #268bd2 1px, transparent 2px) center / 4px 4px no-repeat; }
.page u { text-decoration: underline wavy #f00 1px; text-underline-offset: 2px; }
.pilcrow { color: #268bd2; font-weight: inherit; }
p .pilcrow, .formula-line .pilcrow { font-weight: 400; }

.formula-line {
  display: flex;
  align-items: center;
  height: 38px;
  padding-left: 58px;
  line-height: 25px;
}
.formula {
  display: flex;
  align-items: center;
  gap: 2px;
  height: 33px;
  padding-right: 3px;
  border: 4px solid transparent;
  background:
    conic-gradient(#000 0 0) left top / 4px 4px,
    conic-gradient(#000 0 0) center top / 4px 4px,
    conic-gradient(#000 0 0) right top / 4px 4px,
    conic-gradient(#000 0 0) left center / 4px 4px,
    conic-gradient(#000 0 0) right center / 4px 4px,
    conic-gradient(#000 0 0) left bottom / 4px 4px,
    conic-gradient(#000 0 0) center bottom / 4px 4px,
    conic-gradient(#000 0 0) right bottom / 4px 4px,
    linear-gradient(#fff, #fff) center / calc(100% - 8px) calc(100% - 8px),
    #c0c0c0;
  background-repeat: no-repeat;
  background-origin: border-box;
  font-size: 22px;
  font-style: italic;
}
.operand { border: 1px dotted #000; }
.inline-formula {
  display: inline-block;
  border: 1px solid #c0c0c0;
  font-size: 22px;
  font-style: italic;
  line-height: 22px;
  text-indent: 0;
}

.scrollbar {
  flex: none;
  display: flex;
  justify-content: center;
  width: 26px;
  border-left: 1px solid #fff;
}
.thumb {
  align-self: center;
  width: 5px;
  height: 71px;
  border-radius: 3px;
  background: #858585;
}
.thumb.page-thumb { margin-top: 64px; }
.thumb.tall { height: 208px; }

/* Formula command window */
.splitter {
  flex: none;
  display: flex;
  justify-content: center;
  height: 8px;
  background: linear-gradient(#efefef 5px, #a0a0a0 5px 6px, #efefef 6px 7px, #fff 7px);
}
.splitter-handle { display: grid; place-items: center; width: 73px; height: 7px; background: #696969; }
.command {
  flex: none;
  display: flex;
  height: 262px;
  margin: 13px 10px 10px;
  border: 1px solid #a0a0a0;
}
.code {
  flex: 1;
  padding: 0;
  border: 0;
  outline: 0;
  resize: none;
  color: #0b1a26;
  font: 22px/25px "Liberation Mono", monospace;
  background:
    linear-gradient(#000, #000) 0 0 / 1px 24px,
    linear-gradient(#c0ddf5, #c0ddf5) 2px 1px / calc(12ch - 2px) 23px,
    linear-gradient(#0078d7, #0078d7) 1px 0 / 12ch 25px,
    #fff;
  background-repeat: no-repeat;
}
.command-scroll { flex: none; display: flex; justify-content: center; width: 25px; }

/* Sidebar */
.sidebar {
  flex: none;
  position: relative;
  display: flex;
  width: 499px;
  padding: 0 0 2px 8px;
  border-left: 1px solid #a0a0a0;
}
.side-handle {
  position: absolute;
  left: -1px;
  top: 50%;
  display: grid;
  place-items: center;
  width: 7px;
  height: 73px;
  margin-top: -36px;
  background: #696969;
}
.deck { flex: 1; display: flex; flex-direction: column; }
.deck-head { display: flex; align-items: center; height: 38px; padding: 1px 0 0 2px; }
.grip {
  width: 3px;
  height: 21px;
  margin-right: 8px;
  background: repeating-linear-gradient(#444 0 3px, transparent 3px 6px);
}
.deck-title { flex: 1; margin: 0; font-size: 17px; font-weight: 700; }
.deck-btn { display: grid; place-items: center; width: 22px; height: 24px; }
.combo { display: flex; align-items: center; height: 31px; padding-right: 1px; border: 1px solid #828790; background: #fff; }
.combo select {
  flex: 1;
  height: 29px;
  padding: 0 0 0 1px;
  border: 0;
  background: none;
  appearance: none;
  color: inherit;
  font: inherit;
}
.elements { flex: 1; margin-top: 6px; border: 1px solid #828790; background: #fff; }
.set { display: grid; grid-template-columns: repeat(5, 1fr); padding: 4px 0 5px; }
.set:first-child { padding-top: 0; }
.set + .set { border-top: 1px solid #a0a0a0; }
.set svg { width: 86px; height: 64px; margin: auto; fill: none; stroke: #000; stroke-width: 1.5; }
.set use { stroke: none; }

.tabs { flex: none; display: flex; flex-direction: column; align-items: center; width: 52px; }
.hamburger { height: 37px; }
.tab { display: grid; place-items: center; width: 46px; height: 47px; }
.tab.active { background: #cce8ff; border: 1px solid #99d1ff; border-radius: 3px; }

/* Status bar */
.statusbar {
  flex: none;
  display: flex;
  justify-content: flex-end;
  gap: 39px;
  height: 30px;
  padding: 2px 20px 3px 0;
  border-top: 1px solid #a0a0a0;
}
.unsaved, .zoom { border: solid #c3c3c3; border-width: 0 1px; }
.unsaved { width: 30px; padding-left: 5px; }
.zoom { display: flex; align-items: center; padding: 2px 0 0 4px; }
.zoom-btn { width: 22px; }
.zoom-range {
  width: 163px;
  height: 24px;
  margin: 0;
  appearance: none;
  background: linear-gradient(#707074, #707074) center / 100% 2px no-repeat;
}
.zoom-range::-webkit-slider-thumb {
  appearance: none;
  width: 20px;
  height: 24px;
  background: url("data:image/svg+xml,%3Csvg xmlns='http://www.w3.org/2000/svg' viewBox='0 0 20 24'%3E%3Cpath d='M3 1h14q2 0 2 2v11l-6.500 8.500h-5L1 14V3q0-2 2-2z' fill='%23f2f2f7' stroke='%238e8e92' stroke-width='1.500'/%3E%3C/svg%3E") center / 20px 24px no-repeat;
}
```
